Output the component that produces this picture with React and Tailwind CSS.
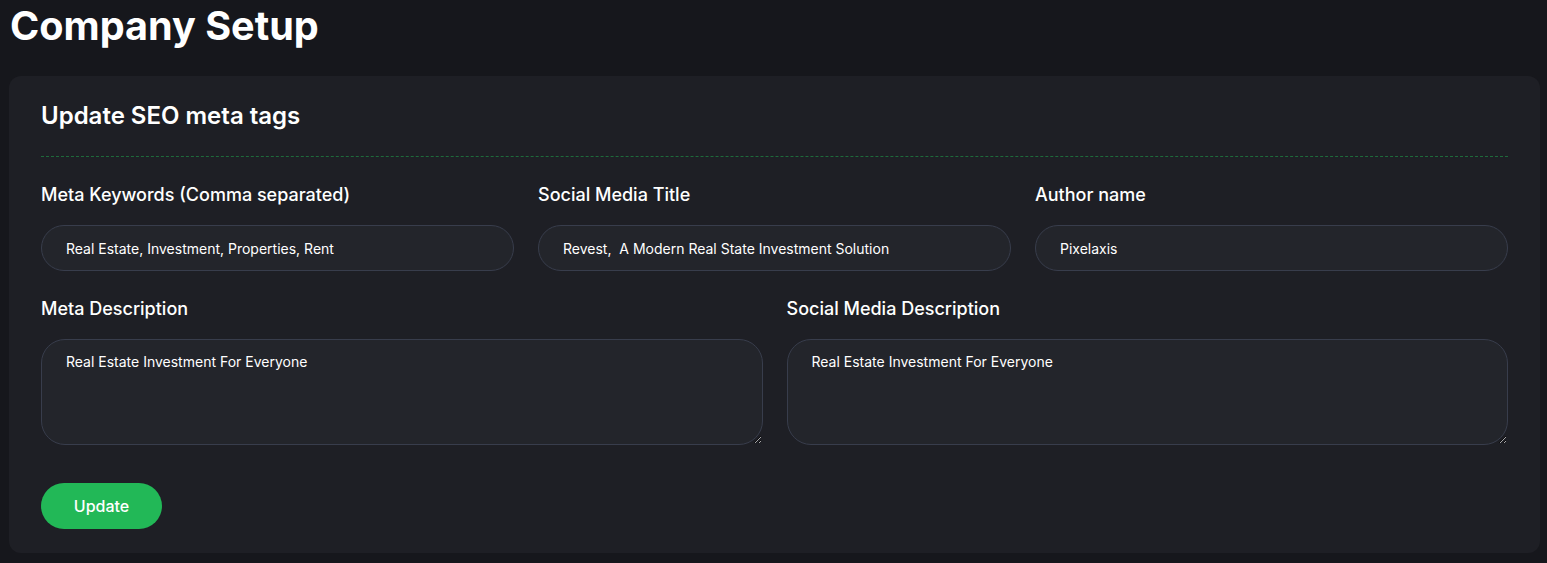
export default function App() {
  return (
    <div className="min-h-screen bg-[#16171c] pl-[9px] pr-[7px] pt-[2px] font-['Inter',sans-serif] text-white">
      <h1 className="text-[39.6px] font-bold leading-[48px] pl-[1px]">Company Setup</h1>

      <div className="mt-[26px] rounded-xl bg-[#1e1f25] px-8 pt-[24px] pb-6">
        <h2 className="text-2xl font-semibold leading-8">Update SEO meta tags</h2>
        <div className="mt-[24px] border-t border-dashed border-[#1f6a3b]" />

        <div className="mt-[24px] grid grid-cols-3 gap-6">
          {[
            ["Meta Keywords (Comma separated)", "Real Estate, Investment, Properties, Rent"],
            ["Social Media Title", "Revest,  A Modern Real State Investment Solution"],
            ["Author name", "Pixelaxis"],
          ].map(([label, value]) => (
            <div key={label}>
              <label className="block text-lg font-medium leading-7">{label}</label>
              <input
                defaultValue={value}
                className="mt-[16px] h-[46px] w-full rounded-full border border-[#383d4c] bg-[#23252b] px-6 text-sm text-white outline-none"
              />
            </div>
          ))}
        </div>

        <div className="mt-[24px] grid grid-cols-2 gap-6">
          {["Meta Description", "Social Media Description"].map((label) => (
            <div key={label}>
              <label className="block text-lg font-medium leading-7">{label}</label>
              <textarea
                defaultValue="Real Estate Investment For Everyone"
                className="mt-[16px] block h-[106px] w-full rounded-3xl border border-[#383d4c] bg-[#23252b] px-6 py-[12px] text-sm text-white outline-none"
              />
            </div>
          ))}
        </div>

        <button className="mt-[38px] h-[46px] w-[121px] rounded-full bg-[#22b857] text-base font-medium text-white">
          Update
        </button>
      </div>
    </div>
  );
}
